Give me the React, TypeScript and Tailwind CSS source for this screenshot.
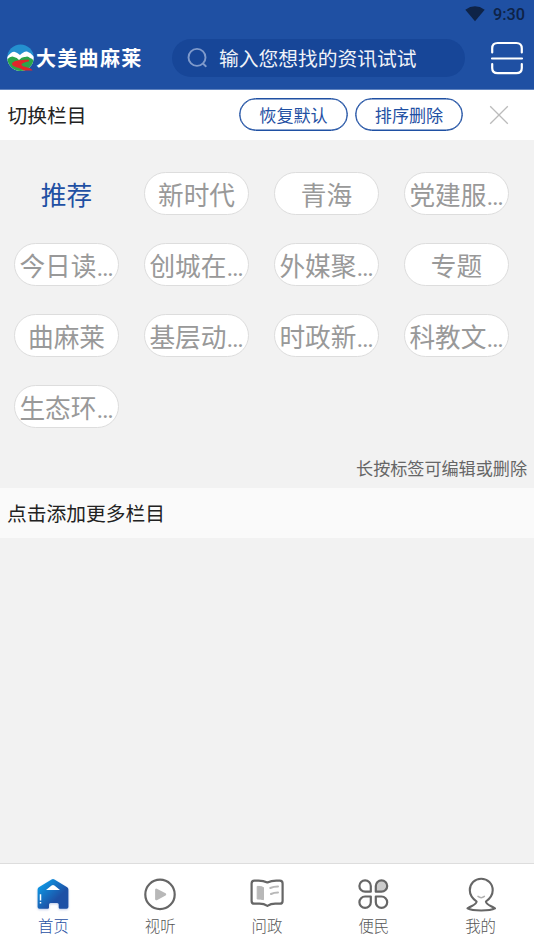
import type { ReactNode } from "react";

const channels = [
	"推荐",
	"新时代",
	"青海",
	"党建服…",
	"今日读…",
	"创城在…",
	"外媒聚…",
	"专题",
	"曲麻莱",
	"基层动…",
	"时政新…",
	"科教文…",
	"生态环…",
];

function HomeIcon() {
	return (
		<svg width="40" height="40" viewBox="0 0 40 40" className="drop-shadow-[0_1px_1px_rgba(32,80,180,0.3)]">
			<defs>
				<linearGradient id="home" x1="0" y1="0" x2="1" y2="1">
					<stop offset="0.1" stopColor="#0c9ce8" />
					<stop offset="0.65" stopColor="#1d50a5" />
				</linearGradient>
			</defs>
			<path
				d="M18.6 5.4Q20 4.4 21.4 5.4L34.2 13.2Q35.4 14 35.4 15.4V33Q35.4 34.8 33.6 34.8H27Q25.7 34.8 25.7 33.5V30.5Q25.7 29 24.2 29H17.5Q16 29 16 30.5V33.5Q16 34.8 14.7 34.8H6.4Q4.6 34.8 4.6 33V15.4Q4.6 14 5.8 13.2Z"
				fill="url(#home)"
			/>
			<path d="M13 16L18.6 11.6Q20 10.5 21.4 11.6L27 16Z" fill="#fff" />
			<path d="M7.5 20.3V26.5M7.5 28V29.6" stroke="#fff" strokeWidth="1.5" />
		</svg>
	);
}

function VideoIcon() {
	return (
		<svg width="40" height="40" viewBox="0 0 40 40" fill="none">
			<circle cx="20" cy="20.4" r="14.7" stroke="#666" strokeWidth="2.2" />
			<path d="M16.3 15.7V25.1L25 20.4Z" fill="#b8b8b8" stroke="#b8b8b8" strokeWidth="2.4" strokeLinejoin="round" />
		</svg>
	);
}

function BookIcon() {
	return (
		<svg width="40" height="40" viewBox="0 0 40 40" fill="none">
			<path
				d="M20.4 8.5Q16.5 6.6 11.5 6.6H7.400Q4.6 6.6 4.6 9.400V26.900Q4.6 29.7 7.400 29.7H12.5Q17 29.7 20.4 31.9Q23.8 29.7 28.3 29.7H32.800Q35.6 29.7 35.6 26.900V9.400Q35.6 6.6 32.800 6.6H29.3Q24.3 6.6 20.4 8.5Z"
				stroke="#666"
				strokeWidth="2.2"
				strokeLinejoin="round"
			/>
			<path d="M10.2 12.4Q13.5 12 16.500 13.500V25.700Q13.5 24.8 10.2 25Z" fill="#b8b8b8" stroke="#b8b8b8" strokeLinejoin="round" />
			<path d="M23.3 14Q26.5 12.4 31 12.4M24 20Q27 18.4 31 18.4" stroke="#b8b8b8" strokeWidth="2" strokeLinecap="round" />
		</svg>
	);
}

function PetalIcon() {
	return (
		<svg width="40" height="40" viewBox="0 0 40 40" fill="none" stroke="#666" strokeWidth="2.2" strokeLinejoin="round">
			<path d="M16.8 17.7H11.1A5.7 5.7 0 1 1 16.8 12Z" />
			<path d="M21.8 17.7V12A5.7 5.7 0 1 1 27.5 17.7Z" fill="#ccc" />
			<path d="M16.8 22.5H11.1A5.7 5.7 0 1 0 16.8 28.2Z" />
			<path d="M21.8 22.5V28.2A5.7 5.7 0 1 0 27.5 22.5Z" />
		</svg>
	);
}

function MineIcon() {
	return (
		<svg width="40" height="40" viewBox="0 0 40 40" fill="none" strokeLinejoin="round" strokeLinecap="round">
			<path
				d="M15.6 27.5C11.2 24.3 8.8 20.3 8.8 16.2C8.8 9.6 13.7 4.8 20.2 4.8C26.7 4.8 31.7 9.6 31.7 16.2C31.7 20.3 29.3 24.3 24.9 27.5C25.3 31 29 31.2 34 34.4C31 36 26 36.5 20.2 36.5C14.4 36.5 9.5 36 6.5 34.4C11.5 31.2 15.2 31 15.6 27.5Z"
				stroke="#666"
				strokeWidth="2.1"
			/>
			<path d="M17 22.4Q20.2 25 23.4 22.4" stroke="#b0b0b0" strokeWidth="1.5" />
		</svg>
	);
}

const tabs: { name: string; icon: ReactNode }[] = [
	{ name: "首页", icon: <HomeIcon /> },
	{ name: "视听", icon: <VideoIcon /> },
	{ name: "问政", icon: <BookIcon /> },
	{ name: "便民", icon: <PetalIcon /> },
	{ name: "我的", icon: <MineIcon /> },
];

function Logo() {
	return (
		<svg width="28" height="28" viewBox="0 0 28 28">
			<clipPath id="logo">
				<circle cx="13.5" cy="13.7" r="13.2" />
			</clipPath>
			<g clipPath="url(#logo)">
				<path d="M0 0H28V28H0Z" fill="#2490cf" />
				<path d="M0 13Q5 7 8 8Q10 8.5 13 11Q17 7 20 7.5Q24 8.5 28 14V28H0Z" fill="#fff" />
				<path d="M0 15.5Q4 11.5 7 13Q10 13.5 12 16Q15 12.5 18 13Q21 11.5 23 14Q25 14 28 18V28H0Z" fill="#2aa54a" />
			</g>
			<path
				d="M22 15.8C12 16 5.5 17 5 19.8C4.6 23.4 13 23 16.5 26.6H25.5Q25 24.6 19.5 23.2C12 21.2 13 19 22 17.2Z"
				fill="#e0242b"
			/>
		</svg>
	);
}

function Header() {
	return (
		<header className="h-[90px] shrink-0 bg-[#1f50a3] border-b border-[#5f83bf]">
			{/* 状态栏 */}
			<div className="h-[27px] flex justify-end items-center pr-[9px] gap-[8px] text-[#0e2347]">
				<svg width="20" height="16" viewBox="0 0 20 16">
					<path d="M0.3 3.7Q10 -3.2 19.7 3.7L10 15.2Z" fill="currentColor" />
				</svg>
				<span className="text-[16.3px] leading-none font-medium pt-[3px]">9:30</span>
			</div>
			{/* 搜索栏 */}
			<div className="h-[62px] flex items-center pl-[7px] pr-[10px]">
				<Logo />
				<div className="w-[137px] text-[20px] tracking-[1.3px] font-bold text-white leading-none pl-px pt-px whitespace-nowrap">
					大美曲麻莱
				</div>
				<div className="w-[293px] h-[38px] rounded-full bg-[#174698] flex items-center pl-[15px]">
					<svg width="22" height="22" viewBox="0 0 22 22" fill="none" stroke="#7f9acb" strokeWidth="1.9">
						<circle cx="10" cy="10.4" r="8.5" />
						<path d="M16.2 16.7L18.8 19.2" strokeLinecap="round" />
					</svg>
					<span className="pl-[10px] pt-[3px] text-[19.75px] leading-none text-[#f0f3f8]">输入您想找的资讯试试</span>
				</div>
				<svg width="34" height="34" viewBox="0 0 34 34" className="ml-auto" fill="none" stroke="#fff" strokeWidth="2.2" strokeLinecap="round">
					<path d="M2.2 11.5V7.5Q2.2 2 7.7 2H26.3Q31.8 2 31.8 7.5V11.5M2.2 23V27Q2.2 32.2 7.7 32.2H26.3Q31.8 32.2 31.8 27V23M2 17.5H32" />
				</svg>
			</div>
		</header>
	);
}

function App() {
	return (
		<div className="h-screen flex flex-col bg-[#f2f2f2] font-[Roboto,'Noto_Sans_CJK_SC',sans-serif] overflow-hidden">
			<Header />
			{/* 栏目操作 */}
			<div className="h-[50px] shrink-0 bg-white flex items-center pl-[7.5px] pr-[25px]">
				<h1 className="pt-[4px] text-[19.75px] leading-none text-[#222]">切换栏目</h1>
				<button className="ml-auto mb-px w-[109px] h-[33px] pt-[4px] border border-[#1f50a3] rounded-full text-[17.1px] leading-none text-[#1f50a3] shadow-[inset_0_0_0_0.5px_#1f50a3]">
					恢复默认
				</button>
				<button className="ml-[7px] mb-px w-[108px] h-[33px] pt-[4px] border border-[#1f50a3] rounded-full text-[17.1px] leading-none text-[#1f50a3] shadow-[inset_0_0_0_0.5px_#1f50a3]">
					排序删除
				</button>
				<svg width="20" height="20" viewBox="0 0 20 20" className="ml-[26px]" stroke="#bbb" strokeWidth="1.3">
					<path d="M1.2 1.2L18.8 18.8M18.8 1.2L1.2 18.8" />
				</svg>
			</div>
			{/* 我的栏目 */}
			<div className="h-[348px] shrink-0 flex flex-col justify-between pt-[32px] pb-[9px]">
				<div className="grid grid-cols-[repeat(4,105px)] gap-x-[25px] gap-y-[28.1px] pl-[14px]">
					{channels.map((name, i) => (
						<div
							key={name}
							className={
								i === 0
									? "h-[43px] pt-[6px] flex items-center justify-center text-[25.7px] leading-none text-[#1f50a3]"
									: "h-[43px] pt-[6px] flex items-center justify-center text-[25.7px] leading-none text-[#999] bg-white border border-[#ddd] rounded-full whitespace-nowrap"
							}
						>
							{name}
						</div>
					))}
				</div>
				<div className="text-right pr-[7px] text-[17.1px] leading-[20px] text-[#666]">长按标签可编辑或删除</div>
			</div>
			<div className="h-[50px] shrink-0 bg-[#fafafa] flex items-center pl-[7px] pt-[4px] text-[19.75px] leading-none text-[#222]">
				点击添加更多栏目
			</div>
			{/* 底部导航 */}
			<nav className="mt-auto h-[86px] shrink-0 bg-white border-t border-[#ddd] flex pt-[10px]">
				{tabs.map((tab, i) => (
					<div key={tab.name} className="flex-1 flex flex-col items-center">
						{tab.icon}
						<span className={i === 0 ? "text-[15.4px] leading-[26px] font-light text-[#1f50a3]" : "text-[15.4px] leading-[26px] font-light text-[#555]"}>
							{tab.name}
						</span>
					</div>
				))}
			</nav>
		</div>
	);
}

export default App;
